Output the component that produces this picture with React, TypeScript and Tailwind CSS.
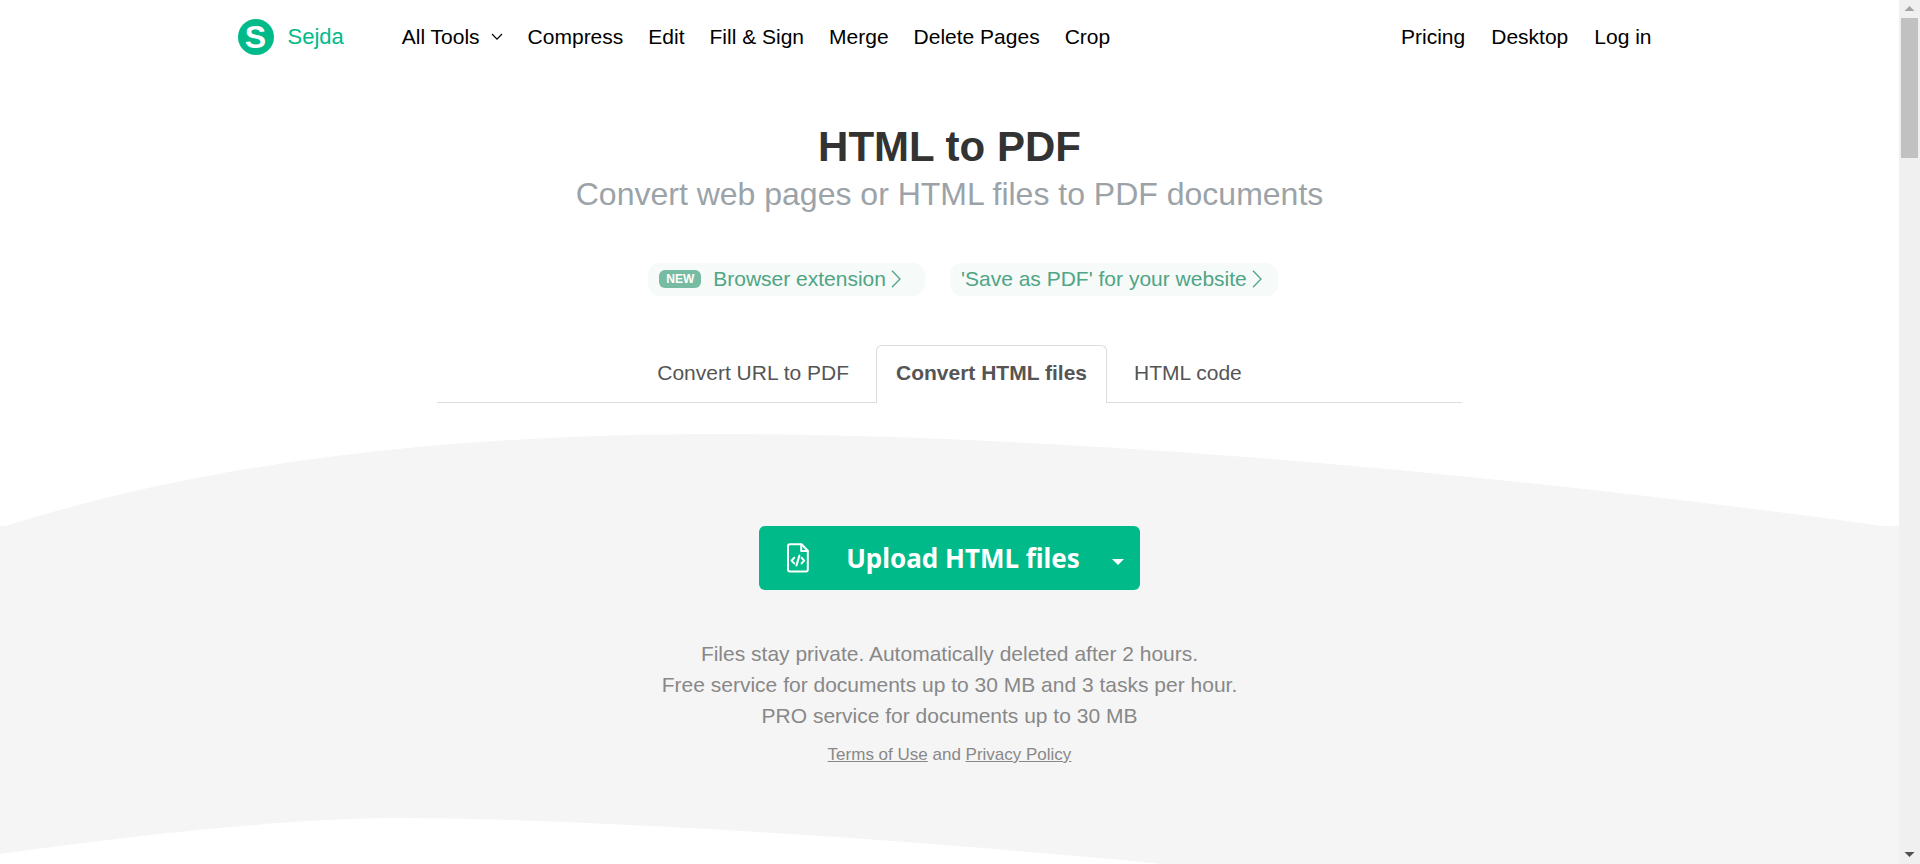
const tools = ['Compress', 'Edit', 'Fill & Sign', 'Merge', 'Delete Pages', 'Crop'];
const account = ['Pricing', 'Desktop', 'Log in'];

function Chevron({ className }: { className: string }) {
  return (
    <svg viewBox="0 0 10 18" className={className} fill="none" stroke="currentColor" strokeWidth="1.3" aria-hidden="true">
      <path d="M1 0.8 L9 9 L1 17.2" />
    </svg>
  );
}

function Header() {
  return (
    <header className="mx-auto flex h-[73px] w-full max-w-[1424px] items-center justify-between pr-[10px] text-[21px] text-black">
      <div className="flex items-center">
        <a href="#home" className="flex items-center gap-[14px] text-[#00bb89]">
          <span className="flex size-9 items-center justify-center rounded-full bg-[#00bb89] text-[32px] leading-9 font-bold text-white">S</span>
          <span className="text-[22px]">Sejda</span>
        </a>
        <nav className="ml-[58px] flex items-center gap-[25px]">
          <button type="button" className="flex items-center gap-[11px]">
            All Tools
            <svg viewBox="0 0 12 8" className="h-2 w-3" fill="none" stroke="currentColor" strokeWidth="1.2" aria-hidden="true">
              <path d="M1 1 L6 6.2 L11 1" />
            </svg>
          </button>
          {tools.map((t) => (
            <a key={t} href="#tool">{t}</a>
          ))}
        </nav>
      </div>
      <nav className="flex items-center gap-[26px]">
        {account.map((t) => (
          <a key={t} href="#account">{t}</a>
        ))}
      </nav>
    </header>
  );
}

function Promos() {
  return (
    <div className="mt-[48px] flex justify-center gap-[25px] pl-[27px] text-[21px] text-[#4fa584]">
      <a href="#extension" className="flex h-[33px] items-center rounded-xl bg-[#f6faf9] pr-6 pb-px pl-[11px]">
        <span className="mr-3 rounded-md bg-[#77bba2] px-[7px] text-xs leading-[18px] font-bold text-white">NEW</span>
        Browser extension
        <Chevron className="ml-[5px] h-[18px] w-[10px]" />
      </a>
      <a href="#save" className="flex h-[33px] items-center rounded-xl bg-[#f6faf9] pr-4 pb-px pl-[11px]">
        &#39;Save as PDF&#39; for your website
        <Chevron className="ml-[5px] h-[18px] w-[10px]" />
      </a>
    </div>
  );
}

function Tabs() {
  return (
    <div role="tablist" className="mx-auto mt-[49px] flex w-full max-w-[1025px] justify-center border-b border-[#dddddd] text-[21px] text-[#555555]">
      <button role="tab" type="button" aria-selected="false" className="h-[57px] px-[27px] pb-[2px]">Convert URL to PDF</button>
      <button role="tab" type="button" aria-selected="true" className="-mb-px h-[58px] rounded-t-md border border-b-0 border-[#dddddd] bg-white px-[19px] pb-1 font-bold">Convert HTML files</button>
      <button role="tab" type="button" aria-selected="false" className="h-[57px] px-[27px] pb-[2px]">HTML code</button>
    </div>
  );
}

function Upload() {
  return (
    <section className="flex flex-col items-center bg-[#f5f5f5] pb-[51px] text-[#888888]">
      <div className="flex h-16 rounded-md bg-[#00bb89] font-['Noto_Sans',sans-serif] text-white">
        <button type="button" className="flex items-center pl-7 text-[26px] font-bold">
          <svg viewBox="0 0 22 30" className="mr-[37px] h-[30px] w-[22px]" fill="none" stroke="currentColor" strokeWidth="2" strokeLinejoin="round" strokeLinecap="round" aria-hidden="true">
            <path d="M3 1.2 H14.5 L20.8 7.8 V26.5 Q20.8 28.5 18.8 28.5 H3 Q1 28.5 1 26.5 V3.2 Q1 1.2 3 1.2 Z" />
            <path d="M14.2 1.5 V8 H20.6" />
            <path d="M7.2 14.8 L4.6 17.6 L7.2 20.4 M14.6 14.8 L17.2 17.6 L14.6 20.4 M12.4 12.6 L9.4 22.6" />
          </svg>
          Upload HTML files
        </button>
        <button type="button" aria-label="More upload options" className="flex items-center pt-2 pr-4 pl-8">
          <svg viewBox="0 0 12 6" className="h-[6px] w-3" fill="currentColor" aria-hidden="true">
            <path d="M0 0 H12 L6 6 Z" />
          </svg>
        </button>
      </div>
      <p className="mt-[48px] text-center text-[21px] leading-[31px]">
        Files stay private. Automatically deleted after 2 hours.
        <br />
        Free service for documents up to 30 MB and 3 tasks per hour.
        <br />
        PRO service for documents up to 30 MB
      </p>
      <p className="mt-3 text-[17px] leading-6">
        <a href="#terms" className="underline">Terms of Use</a> and <a href="#privacy" className="underline">Privacy Policy</a>
      </p>
    </section>
  );
}

function Scrollbar() {
  return (
    <div aria-hidden="true" className="flex w-[21px] shrink-0 flex-col items-center bg-[#f0f0f0]">
      <svg viewBox="0 0 21 18" className="h-[18px] w-[21px]" fill="#a3a3a3">
        <path d="M5.5 11 L10.5 6 L15.5 11 Z" />
      </svg>
      <div className="h-[140px] w-[17px] bg-[#c1c1c1]" />
      <svg viewBox="0 0 21 18" className="mt-auto h-[18px] w-[21px]" fill="#505050">
        <path d="M5.5 6 L10.5 11 L15.5 6 Z" />
      </svg>
    </div>
  );
}

export default function App() {
  return (
    <div className="flex h-screen overflow-hidden bg-white font-['Liberation_Sans',Arial,sans-serif]">
      <div className="min-w-0 flex-1">
        <Header />
        <main>
          <h1 className="mt-[49px] text-center text-[42px] leading-[50px] font-bold text-[#333333]">HTML to PDF</h1>
          <h2 className="mt-px text-center text-[32px] leading-[42px] text-[#9ba3a8]">Convert web pages or HTML files to PDF documents</h2>
          <Promos />
          <Tabs />
          <svg viewBox="0 0 1899 92" preserveAspectRatio="none" className="mt-[31px] block h-[92px] w-full" aria-hidden="true">
            <path fill="#f5f5f5" d="M0 92 H6 C200 30 440 0 720 0 C1060 0 1500 39 1882 92 H1899 Z" />
          </svg>
          <Upload />
          <svg viewBox="0 0 1899 46" preserveAspectRatio="none" className="block h-[46px] w-full bg-[#f5f5f5]" aria-hidden="true">
            <path fill="#ffffff" d="M0 36 C160 14 300 0 398 0 C567 0 900 20 1162 46 H0 Z" />
          </svg>
        </main>
      </div>
      <Scrollbar />
    </div>
  );
}
